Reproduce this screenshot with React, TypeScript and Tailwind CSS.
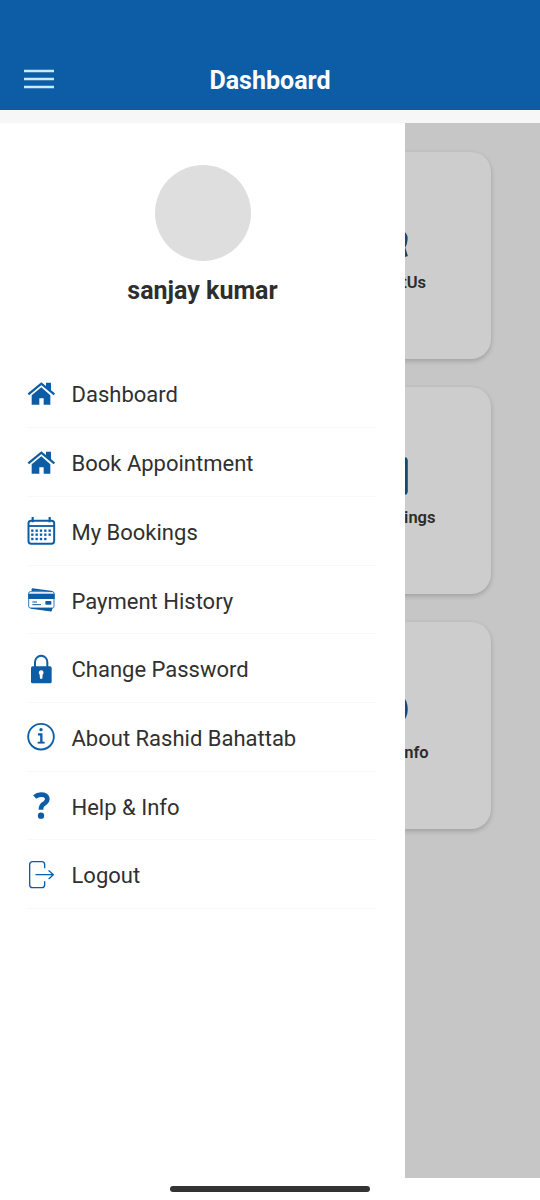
import type { ReactNode } from 'react';

interface MenuItem {
  label: string;
  icon: ReactNode;
}

function Icon({ children }: { children: ReactNode }) {
  return (
    <svg viewBox="0 0 84 84" className="w-7 h-7 shrink-0 overflow-visible text-[#0d5da6]" fill="none" stroke="currentColor">
      {children}
    </svg>
  );
}

function HomeIcon() {
  return (
    <Icon>
      <path d="M57 8h15v28L57 25z" fill="currentColor" stroke="none" />
      <path d="M4 43 43 11l39 32" strokeWidth={7} />
      <path d="M14 46 43 22l27 24v28H50V55H37v19H14z" fill="currentColor" stroke="none" />
    </Icon>
  );
}

function CalendarIcon() {
  const dots = [41, 53, 66].flatMap((y) => [16, 29, 42, 55, 68].map((x) => ({ x, y })));
  return (
    <Icon>
      <rect x={4.5} y={11} width={77} height={69} rx={8} strokeWidth={6} />
      <path d="M4 27h78" strokeWidth={5.5} />
      <path d="M17 0v16M68 0v16" strokeWidth={6.5} />
      {dots
        .filter((d) => !(d.x === 68 && d.y === 66))
        .map((d) => (
          <rect key={`${d.x}-${d.y}`} x={d.x - 3.5} y={d.y - 3.5} width={7} height={7} fill="currentColor" stroke="none" />
        ))}
    </Icon>
  );
}

function CardsIcon() {
  return (
    <Icon>
      <path d="M14 15 17 8l35 6zM10 65l62 11 4-10z" fill="currentColor" stroke="none" />
      <path d="M14 13 17 9l60 8M12 66l60 8 3-8" strokeWidth={4} />
      <rect x={5} y={17} width={76} height={49} rx={5} fill="white" strokeWidth={2.5} />
      <path d="M4 23h79v16H4z" fill="currentColor" stroke="none" />
      <path d="M16 48h14M16 56h26" strokeWidth={3} />
      <rect x={55} y={45} width={18} height={11} rx={2} fill="currentColor" stroke="none" />
    </Icon>
  );
}

function LockIcon() {
  return (
    <Icon>
      <path d="M24 38V21a18.5 18.5 0 0 1 37 0v17" strokeWidth={6} />
      <rect x={12} y={34} width={62} height={51} rx={5} fill="currentColor" stroke="none" />
      <path d="M42 46a7 7 0 0 0-4 12.500l1 12.500h7l1-12.500A7 7 0 0 0 42 46z" fill="white" stroke="none" />
    </Icon>
  );
}

function InfoIcon() {
  return (
    <Icon>
      <circle cx={42} cy={41} r={38.5} strokeWidth={5.5} />
      <circle cx={42} cy={20} r={5} fill="currentColor" stroke="none" />
      <path d="M33 34h10v24" strokeWidth={7} />
      <path d="M32 59h21" strokeWidth={5.5} />
    </Icon>
  );
}

function QuestionIcon() {
  return (
    <Icon>
      <path d="M23 15Q31 8 42 8c22 0 23 16 12 25-8 6-12 8-12 20" strokeWidth={14} />
      <circle cx={42} cy={71} r={9.5} fill="currentColor" stroke="none" />
    </Icon>
  );
}

function LogoutIcon() {
  return (
    <Icon>
      <path
        d="M53 20v-9q0-9-9-9H17q-9 0-9 9v60q0 9 9 9h27q9 0 9-9v-9M27 41h51M66 29l13 12-13 12"
        strokeWidth={4}
        strokeLinecap="round"
        strokeLinejoin="round"
      />
    </Icon>
  );
}

const menu: MenuItem[] = [
  { label: 'Dashboard', icon: <HomeIcon /> },
  { label: 'Book Appointment', icon: <HomeIcon /> },
  { label: 'My Bookings', icon: <CalendarIcon /> },
  { label: 'Payment History', icon: <CardsIcon /> },
  { label: 'Change Password', icon: <LockIcon /> },
  { label: 'About Rashid Bahattab', icon: <InfoIcon /> },
  { label: 'Help & Info', icon: <QuestionIcon /> },
  { label: 'Logout', icon: <LogoutIcon /> },
];

const tiles: MenuItem[] = [
  {
    label: 'ContactUs',
    icon: <path d="M33 9Q39 12 38 18 37.500 23 35.500 25L38.500 34.500" stroke="currentColor" strokeWidth={3} fill="none" />,
  },
  { label: 'My Bookings', icon: <rect x={0} y={0} width={39.8} height={38} rx={4} fill="currentColor" /> },
  { label: 'Help & Info', icon: <circle cx={19.5} cy={17} r={20.3} fill="currentColor" /> },
];

function Drawer() {
  return (
    <aside className="absolute inset-y-0 left-0 w-[405px] bg-white">
      <div className="flex flex-col items-center pt-[42px] h-[236.6px]">
        <div className="size-24 rounded-full bg-[#dedede]" />
        <p className="mt-[13px] text-[25px] leading-[34px] font-bold text-[#2e2e2e]">sanjay kumar</p>
      </div>
      <nav className="pl-[27px] pr-7">
        {menu.map((item) => (
          <div key={item.label} className="flex items-center h-[68.7px] pt-px border-b border-[#f8f8f8]">
            {item.icon}
            <span className="ml-[16.5px] pt-[3px] text-[22px] leading-7 text-[#303030] whitespace-nowrap">{item.label}</span>
          </div>
        ))}
      </nav>
    </aside>
  );
}

export default function App() {
  return (
    <div className="flex flex-col w-[540px] h-[1200px] bg-white overflow-hidden font-['Roboto',sans-serif]">
      <header className="h-[110px] shrink-0 pt-[50px] bg-[#0d5da6] grid grid-cols-[1fr_auto_1fr] items-center">
        <svg viewBox="0 0 30 20" className="ml-6 mb-0.5 w-[30px] h-5" stroke="#c9e9ff" strokeWidth={2.3}>
          <path d="M0 2h30M0 10h30M0 18h30" />
        </svg>
        <h1 className="pt-0.5 text-[25px] leading-8 font-bold text-white">Dashboard</h1>
      </header>
      <div className="h-[13px] shrink-0 bg-[#f7f7f7]" />

      <main className="relative h-[1055px] shrink-0 bg-[#c6c6c6] overflow-hidden">
        <div className="flex flex-col gap-7 pt-[28.6px] pr-[49px] items-end">
          {tiles.map((tile) => (
            <div
              key={tile.label}
              className="flex flex-col items-center w-[207px] h-[207.200px] pt-[70px] rounded-[20px] bg-[#cdcdcd] shadow-[0_2px_5px_rgba(0,0,0,0.2)]"
            >
              <svg viewBox="0 0 40 38" className="w-10 h-[38px] overflow-visible text-[#124a73]">
                {tile.icon}
              </svg>
              <span className="mt-[13px] text-[16.5px] leading-5 font-semibold text-[#2b2b2b]">{tile.label}</span>
            </div>
          ))}
        </div>
        <Drawer />
      </main>

      <footer className="flex-1 flex justify-center pt-2">
        <div className="w-[200px] h-[5.500px] rounded-full bg-[#333]" />
      </footer>
    </div>
  );
}
